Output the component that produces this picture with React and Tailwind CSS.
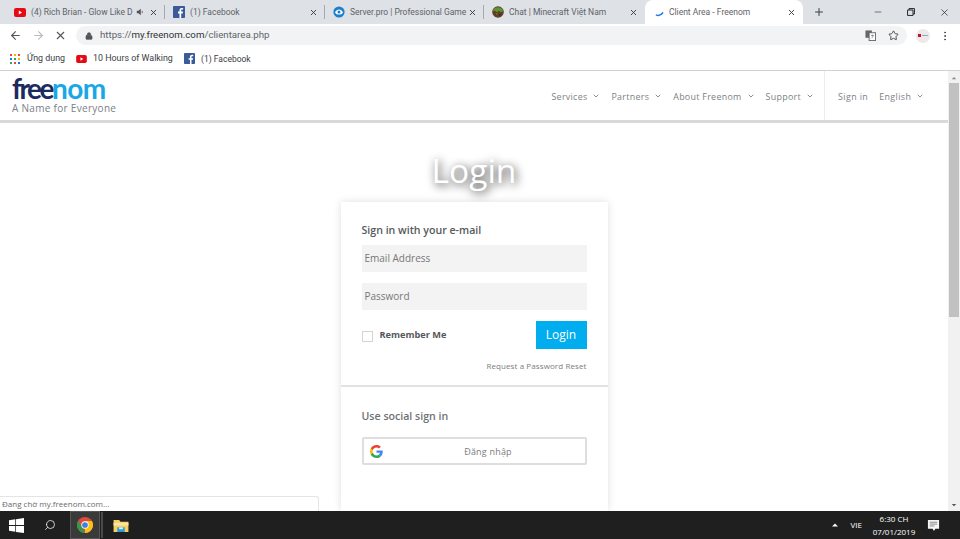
import React from "react";
import { ArrowLeft, ArrowRight, X, Plus, Minus, Lock, Star, ChevronDown, Search, MoreVertical } from "lucide-react";

const YT = ({ className }) => (
  <svg viewBox="0 0 12 9" className={className}>
    <rect width="12" height="9" rx="2" fill="#e60a17" />
    <path d="M4.8 2.5 8 4.5 4.8 6.5z" fill="#fff" />
  </svg>
);
const FB = ({ className }) => (
  <svg viewBox="0 0 12 12" className={className}>
    <rect width="12" height="12" rx="0.8" fill="#3b5a9a" />
    <path d="M8.2 12V7.4h1.5l.3-1.8H8.2V4.5c0-.5.2-.9.9-.9h1V2c-.3 0-.8-.1-1.3-.1-1.4 0-2.3.8-2.3 2.4v1.3H5v1.8h1.5V12z" fill="#fff" />
  </svg>
);
const ServerPro = ({ className }) => (
  <svg viewBox="0 0 12 12" className={className}>
    <circle cx="6" cy="6" r="5.6" fill="#1b7fc9" />
    <path d="M2 6.4C3 4.4 4.5 3.6 6 3.6s3 .8 4 2.8c-1 1.6-2.5 2.2-4 2.2s-3-.6-4-2.2z" fill="#fff" />
    <circle cx="6" cy="6" r="1.5" fill="#1b7fc9" />
  </svg>
);
const MC = ({ className }) => (
  <svg viewBox="0 0 12 12" className={className}>
    <circle cx="6" cy="6" r="5.8" fill="#5f3f26" />
    <path d="M.6 5A5.8 5.8 0 0 1 11.4 5L9 6.2 7 4.8 5 6.2 3 4.8z" fill="#5d9433" />
    <rect x="4" y="7" width="1.5" height="1.5" fill="#8c6239" />
    <rect x="7" y="8" width="1.5" height="1.5" fill="#3a2615" />
  </svg>
);

function Tab({ icon, title, width, active, audio, sep, pl = "pl-2", gap = "gap-[5px]" }) {
  return (
    <div className={`relative flex h-6 shrink-0 items-center pr-[7px] ${pl} ${gap} ${width} ${active ? "rounded-t-lg bg-white" : ""}`}>
      {icon}
      <span className="mt-px min-w-0 flex-1 whitespace-nowrap font-['Roboto',sans-serif] text-[8.5px] text-[#5f6368]">{title}</span>
      {audio && (
        <svg viewBox="0 0 10 10" className="h-2 w-2 shrink-0">
          <path d="M1 3.5h2L6 1v8L3 6.500H1z" fill="#555" />
          <path d="M7.500 3.500q1 1.500 0 3" stroke="#555" fill="none" />
        </svg>
      )}
      <X className="h-[9px] w-[9px] shrink-0 text-[#3c4043]" strokeWidth={2.5} />
      {sep && <span className="absolute right-0 top-[5px] h-[14px] w-px bg-[#a5a8ad]" />}
    </div>
  );
}

function NavItem({ children }) {
  return (
    <span className="flex items-center gap-[5px]">
      {children}
      <ChevronDown className="h-2 w-2 text-[#777]" strokeWidth={2.5} />
    </span>
  );
}

export default function App() {
  return (
    <div className="flex h-[539px] w-[960px] flex-col overflow-hidden bg-white font-['Open_Sans',sans-serif]">
      {/* Tab strip */}
      <div className="flex h-6 shrink-0 items-center bg-[#dee1e6]">
        <Tab width="w-[165px]" pl="pl-[14px]" icon={<YT className="h-[9px] w-3 shrink-0" />} title="(4) Rich Brian - Glow Like D" audio sep />
        <Tab width="w-[160px]" icon={<FB className="h-3 w-3 shrink-0" />} title="(1) Facebook" sep />
        <Tab width="w-[159px]" icon={<ServerPro className="h-3 w-3 shrink-0" />} title="Server.pro | Professional Game" sep />
        <Tab width="w-[161px]" icon={<MC className="h-3 w-3 shrink-0" />} title="Chat | Minecraft Việt Nam" />
        <Tab
          width="w-[158px]"
          active
          pl="pl-[10px]"
          gap="gap-[5px]"
          icon={
            <svg viewBox="0 0 10 10" className="h-[9px] w-[9px] shrink-0">
              <path d="M1 7.500Q5 10 9 5" stroke="#1a73e8" strokeWidth="1.6" fill="none" />
            </svg>
          }
          title="Client Area - Freenom"
        />
        <Plus className="ml-[10px] h-3 w-3 text-[#3c4043]" strokeWidth={2} />
        <div className="ml-auto flex items-center">
          <Minus className="mr-[24px] h-[10px] w-[10px] text-[#333]" strokeWidth={1.5} />
          <svg viewBox="0 0 10 10" className="mr-[24px] h-2 w-2">
            <path d="M2.500 2.500V.7h6.800v6.800H7.500M.7 2.500h6.800v6.800H.7z" fill="none" stroke="#222" strokeWidth="1.2" />
          </svg>
          <X className="mr-[10px] h-[11px] w-[11px] text-[#222]" strokeWidth={1.5} />
        </div>
      </div>

      {/* Toolbar */}
      <div className="flex h-[23px] shrink-0 items-center bg-white pl-[9px]">
        <ArrowLeft className="h-[13px] w-[13px] text-[#555]" strokeWidth={2} />
        <ArrowRight className="ml-[10px] h-[13px] w-[13px] text-[#b8babd]" strokeWidth={2} />
        <X className="ml-[9px] h-[13px] w-[13px] text-[#555]" strokeWidth={2} />
        <div className="ml-[9px] flex h-[19px] flex-1 items-center rounded-full bg-[#f1f3f4] pl-[9px] pr-[8px]">
          <Lock className="h-2 w-2 fill-[#555] text-[#555]" strokeWidth={2} />
          <span className="ml-[7px] whitespace-nowrap font-['Roboto',sans-serif] text-[9.7px] text-[#5f6368]">
            https://<span className="text-[#303134]">my.freenom.com</span>/clientarea.php
          </span>
          <svg viewBox="0 0 12 12" className="ml-auto h-[11px] w-[11px]">
            <rect x="0.5" y="0.5" width="7" height="8" fill="#666" />
            <rect x="4.500" y="3" width="7" height="8.500" fill="#fff" stroke="#666" />
            <path d="M6.500 6h3M8 5v1M7 9q1.500-1 2-3" stroke="#666" fill="none" strokeWidth="0.7" />
          </svg>
          <Star className="ml-[12px] h-[11px] w-[11px] text-[#444]" strokeWidth={2} />
        </div>
        <div className="ml-[9px] flex h-[14px] w-[14px] items-center justify-center rounded-full bg-[#f0e8e8]">
          <span className="h-[3px] w-[3px] bg-[#c8102e]" />
          <span className="ml-px h-px w-[6px] bg-[#7fb2c4]" />
        </div>
        <MoreVertical className="ml-[9px] mr-[9px] h-3 w-3 text-[#444]" strokeWidth={2} />
      </div>

      {/* Bookmarks */}
      <div className="flex h-6 shrink-0 items-center border-b border-[#d0d1d3] bg-white pl-[10px] font-['Roboto',sans-serif] text-[8.9px] text-[#3c4043]">
        <svg viewBox="0 0 10 10" className="h-[10px] w-[10px]">
          {[
            ["#e8453c", "#f4b400", "#e8453c"],
            ["#1a73e8", "#34a853", "#f4b400"],
            ["#34a853", "#e8453c", "#1a73e8"],
          ].map((row, r) =>
            row.map((c, i) => <rect key={`${r}${i}`} x={i * 4} y={r * 4} width="2" height="2" fill={c} />)
          )}
        </svg>
        <span className="ml-[7px] mt-px w-[37px] whitespace-nowrap">Ứng dụng</span>
        <YT className="ml-3 h-2 w-[11px]" />
        <span className="ml-[6px] mt-px w-[79px] whitespace-nowrap">10 Hours of Walking</span>
        <FB className="ml-3 h-[11px] w-[11px]" />
        <span className="ml-[6px] mt-px text-[8.5px]">(1) Facebook</span>
      </div>

      {/* Viewport */}
      <div className="flex min-h-0 flex-1">
        <div className="relative flex min-w-0 flex-1 flex-col">
          <header className="flex h-[52px] shrink-0 items-stretch border-b-[3px] border-[#d9d9d9] bg-white">
            <div className="ml-3 flex flex-col pt-[3px]">
              <div className="h-[29px] font-['Lato',sans-serif] text-[28px] font-bold leading-[28px]">
                <span className="tracking-[-2.5px] text-[#1c2b5f]">free</span>
                <span className="tracking-[-0.5px] text-[#19a7e6]">nom</span>
              </div>
              <div className="-mt-px whitespace-nowrap text-[10px] leading-[12px] tracking-[0.3px] text-[#7a8086]">A Name for Everyone</div>
            </div>
            <nav className="ml-auto flex items-center gap-[11px] pr-[10px] pt-[2px] text-[8.9px] tracking-[0.3px] text-[#7b7f84]">
              <NavItem>Services</NavItem>
              <NavItem>Partners</NavItem>
              <NavItem>About Freenom</NavItem>
              <NavItem>Support</NavItem>
            </nav>
            <div className="flex w-[124px] items-center gap-[11px] border-l border-[#ececec] pl-[13px] pt-[2px] text-[8.9px] tracking-[0.4px] text-[#7b7f84]">
              <span>Sign in</span>
              <NavItem>English</NavItem>
            </div>
          </header>

          <main className="flex min-h-0 flex-1 flex-col items-center overflow-hidden">
            <h1 className="mt-[25px] h-[54px] text-[33.5px] leading-[44px] text-white [text-shadow:2px_2px_10px_rgba(0,0,0,0.9)]">Login</h1>
            <section className="w-[267px] flex-1 bg-white shadow-[0_0_8px_rgba(0,0,0,0.13)]">
              <div className="h-[185px] border-b-2 border-[#e2e2e2] px-[21px] pt-[21px]">
                <h2 className="text-[10.6px] font-semibold leading-[15px] text-[#56595c]">Sign in with your e-mail</h2>
                <div className="mt-[7px] flex h-[27px] items-center bg-[#f3f3f3] pl-[3px] text-[10px] text-[#777]">Email Address</div>
                <div className="mt-[11px] flex h-[27px] items-center bg-[#f3f3f3] pl-[3px] text-[10px] text-[#777]">Password</div>
                <div className="mt-[11px] flex items-start justify-between">
                  <label className="mt-[7px] flex items-center gap-[7px] text-[9.2px] font-bold text-[#55585b]">
                    <span className="mt-[3px] h-[11px] w-[11px] border border-[#d4d4d4] bg-white" />
                    <span className="-mt-[1px]">Remember Me</span>
                  </label>
                  <button className="flex h-[28px] w-[51px] items-center justify-center bg-[#00adee] text-[12px] text-white">Login</button>
                </div>
                <div className="mt-[11px] text-right text-[8px] leading-[12px] tracking-[0.1px] text-[#7d7d7d]">Request a Password Reset</div>
              </div>
              <div className="px-[21px] pt-[22px]">
                <h2 className="text-[10.6px] font-semibold leading-[15px] text-[#6f7275]">Use social sign in</h2>
                <button className="mt-[13px] flex h-[28px] w-full items-center rounded-[2px] border-2 border-[#dedede] bg-white pl-[6px]">
                  <svg viewBox="0 0 48 48" className="h-[13px] w-[13px]">
                    <path fill="#EA4335" d="M24 9.500c3.500 0 6.700 1.200 9.200 3.600l6.900-6.900C35.900 2.400 30.400 0 24 0 14.600 0 6.500 5.400 2.600 13.200l8 6.200C12.500 13.600 17.800 9.500 24 9.500z" />
                    <path fill="#4285F4" d="M46.900 24.500c0-1.600-.1-3.100-.4-4.500H24v9h12.900c-.6 3-2.300 5.500-4.800 7.200l7.700 6c4.500-4.200 7.100-10.300 7.100-17.700z" />
                    <path fill="#FBBC05" d="M10.500 28.600C10 27.200 9.800 25.600 9.800 24s.3-3.200.7-4.600l-8-6.200C.9 16.400 0 20.100 0 24s.9 7.600 2.600 10.800l7.900-6.200z" />
                    <path fill="#34A853" d="M24 48c6.500 0 11.900-2.100 15.900-5.800l-7.700-6c-2.100 1.400-4.900 2.300-8.200 2.300-6.200 0-11.500-4.200-13.400-9.800l-8 6.200C6.500 42.600 14.600 48 24 48z" />
                  </svg>
                  <span className="mt-px flex-1 pl-[9px] text-center text-[9px] tracking-[0.2px] text-[#7b7b7b]">Đăng nhập</span>
                </button>
              </div>
            </section>
          </main>

          <div className="absolute bottom-0 left-0 flex h-[15px] w-[319px] items-center rounded-tr-[3px] border border-b-0 border-l-0 border-[#e4e4e4] bg-white pl-[2px] text-[8px] text-[#6a6a6a]">Đang chờ my.freenom.com...</div>
        </div>

        {/* Scrollbar */}
        <div className="flex w-3 shrink-0 flex-col items-center bg-[#f1f1f1]">
          <svg viewBox="0 0 8 8" className="mt-[4px] h-[6px] w-[6px]">
            <path d="M1 5.500 4 2.500l3 3z" fill="#888" />
          </svg>
          <div className="mt-[2px] h-[234px] w-[10px] bg-[#c1c1c1]" />
          <svg viewBox="0 0 8 8" className="mb-[3px] mt-auto h-[6px] w-[6px]">
            <path d="M1 2.500 4 5.500l3-3z" fill="#555" />
          </svg>
        </div>
      </div>

      {/* Taskbar */}
      <div className="flex h-[28px] shrink-0 items-center bg-[#1f1f1f] text-white">
        <svg viewBox="0 0 16 16" className="ml-[9px] h-[15px] w-[15px]">
          <path d="M0 2.300 6.700 1.300V7.500H0zM7.500 1.200 16 0V7.500H7.500zM0 8.400H6.700V14.700L0 13.700zM7.500 8.400H16V16L7.500 14.800z" fill="#fff" />
        </svg>
        <Search className="ml-[20px] h-3 w-3 -scale-x-100 text-white" strokeWidth={1.5} />
        <div className="ml-[14px] flex h-[28px] w-[30px] items-center justify-center border border-[#555] bg-[#3a3a3a]">
          <svg viewBox="0 0 24 24" className="h-4 w-4">
            <circle cx="12" cy="12" r="12" fill="#dd4b3e" />
            <path d="M12 24a12 12 0 0 1-10.400-18L8 16z" fill="#2e9d4b" />
            <path d="M12 24a12 12 0 0 0 10.400-18H12z" fill="#fbc116" />
            <circle cx="12" cy="12" r="5.500" fill="#fff" />
            <circle cx="12" cy="12" r="4.300" fill="#3f7fe0" />
          </svg>
        </div>
        <span className="ml-px h-[26px] w-[2px] bg-[#4a4a4a]" />
        <svg viewBox="0 0 16 14" className="ml-[10px] h-[13px] w-4">
          <path d="M0 1h6l1.500 2H16v11H0z" fill="#f6cf60" />
          <rect x="0" y="4" width="16" height="3" fill="#fbe6a2" />
          <rect x="4" y="9" width="8" height="5" fill="#2c9ddb" />
          <rect x="6" y="9" width="4" height="2" fill="#e5f3fb" />
        </svg>

        <svg viewBox="0 0 8 8" className="ml-auto h-[6px] w-[6px]">
          <path d="M0 6 4 2l4 4z" fill="#fff" />
        </svg>
        <span className="ml-[13px] text-[8px]">VIE</span>
        <div className="ml-[10px] flex w-[44px] flex-col items-center pb-[1px] text-[8px] leading-[13px]">
          <span>6:30 CH</span>
          <span>07/01/2019</span>
        </div>
        <svg viewBox="0 0 14 14" className="ml-[11px] mr-[20px] h-[13px] w-[13px]">
          <path d="M1 1h12v9.500H9L7.500 13 6 10.500H1z" fill="#f5f5f5" />
          <path d="M3 3.500h8M3 5.500h8M3 7.500h5" stroke="#555" strokeWidth="0.7" />
        </svg>
      </div>
    </div>
  );
}
